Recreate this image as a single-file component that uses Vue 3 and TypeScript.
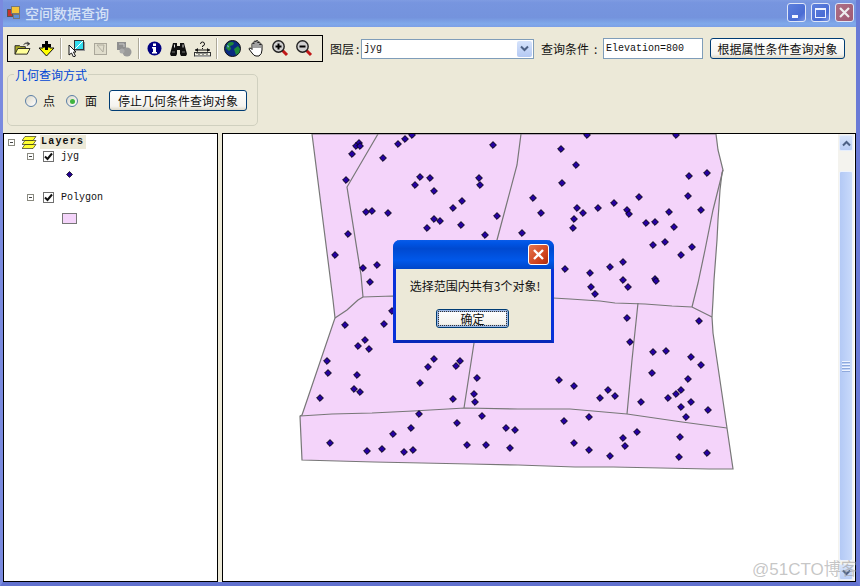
<script setup lang="ts">
const dots: number[][] = [
[359,143],[356,146],[360,146],[352,154],[383,158],[398,144],[405,139],[412,135],[493,145],[561,149],[576,165],[346,180],[420,177],[430,178],[415,185],[434,191],[479,178],[480,185],[562,183],[533,198],[462,201],[453,208],[541,213],[577,208],[574,219],[573,228],[366,212],[372,211],[388,213],[434,219],[440,221],[427,228],[461,225],[497,216],[522,233],[485,235],[348,234],[335,255],[363,268],[377,265],[370,282],[565,269],
[587,135],[676,135],[689,176],[707,173],[688,196],[639,197],[701,210],[669,212],[614,203],[598,208],[583,213],[627,210],[629,214],[646,223],[655,222],[674,227],[653,245],[665,242],[692,247],[681,255],[623,262],[610,267],[590,273],[623,280],[628,287],[591,287],[595,294],[655,279],[656,281],
[345,325],[384,324],[392,311],[365,340],[358,346],[369,349],[327,361],[328,373],[357,375],[354,389],[360,392],[320,398],[434,359],[428,367],[460,361],[456,366],[420,383],[453,399],[477,378],[474,394],[475,402],[559,380],[574,386],[419,414],[411,428],[393,434],[457,423],[482,416],[506,428],[515,430],[564,421],[330,443],[367,451],[382,449],[404,452],[413,450],[467,445],[486,445],[510,448],[574,443],
[627,318],[630,342],[699,321],[653,352],[666,351],[691,357],[701,365],[652,373],[688,379],[608,390],[600,398],[615,396],[641,402],[681,390],[676,394],[668,398],[691,402],[681,407],[708,410],[686,417],[589,417],[637,432],[623,438],[625,446],[680,437],[589,450],[610,456],[679,457],[707,453]
]
const outline = '312,134 333,300 335,318 302,415 300,416 302,460 374,462 422,463 470,464 518,465 575,467 613,467 661,468 709,469 733,469 727,428 713,333 712,317 713,300 714,280 717,240 718,220 720,190 722,173 723,170 718,150 716,134'
const lines: string[] = [
'378,134 347,187 361,275 363,297 393,296 480,297 553,298 570,299 600,301 615,303 645,304 672,306 692,307 698,310 712,317',
'363,297 358,300 347,310 335,318',
'521,134 517,165 505,210 497,240 484,297 474,343 464,408',
'723,170 713,210 705,250 698,283 692,307',
'638,303 632,360 627,414',
'300,416 332,414 372,413 413,411 465,408 518,409 570,409 627,414 682,422 727,428'
]
</script>

<template>
  <div class="win">
    <header class="title">
      <svg class="app-ico" width="13" height="13" viewBox="0 0 13 13">
        <rect x="0.5" y="3.5" width="5" height="7" fill="#c8332a" stroke="#555"/>
        <rect x="4.5" y="0.5" width="8" height="7" fill="#f5c53a" stroke="#777"/>
        <rect x="6.5" y="8.5" width="6" height="4" fill="#5d8fd8" stroke="#777"/>
      </svg>
      <span class="title-text">空间数据查询</span>
      <div class="caps">
        <span class="cap"><i class="min"></i></span>
        <span class="cap"><i class="max"></i></span>
        <span class="cap close">
          <svg width="13" height="13" viewBox="0 0 13 13"><path d="M2 2 11 11M11 2 2 11" stroke="#eee" stroke-width="2.2"/></svg>
        </span>
      </div>
    </header>

    <section class="head">
      <div class="row">
        <div class="toolbar">
          <span class="cell"><svg width="17" height="15" viewBox="0 0 18 16">
            <path d="M1 14V5h5l1 1h5v3" fill="#a8a820" stroke="#222"/>
            <path d="M1 14 4 8h13l-3 6z" fill="#ffff99" stroke="#222"/>
            <path d="M10 4q2-3 5-2l-1-1 3 2-3 2 1-2q-3-1-5 1z" fill="#333" stroke="#333" stroke-width=".5"/>
          </svg></span>
          <span class="cell"><svg width="17" height="17" viewBox="0 0 17 17">
            <path d="M1 8h4v-1h7v1h4l-7.500 8z" fill="#ffff00" stroke="#111"/>
            <path d="M7 1h3v3h3v3h-3v3H7V7H4V4h3z" fill="#000"/>
          </svg></span>
          <i class="sep"></i>
          <span class="cell"><svg width="17" height="17" viewBox="0 0 17 17">
            <rect x="7" y="2" width="10" height="9" fill="#999"/>
            <rect x="6.500" y="0.500" width="9" height="9" fill="#33ddee" stroke="#333"/>
            <path d="M7 9 15 1" stroke="#fff"/>
            <path d="M1 5v10l2.500-2 2 4 2-1-2-4H8z" fill="#fff" stroke="#111"/>
          </svg></span>
          <span class="cell"><svg width="15" height="14" viewBox="0 0 15 14">
            <rect x="1.500" y="1.500" width="12" height="11" fill="#e0ddcc" stroke="#aaa79a"/>
            <path d="M4 3h7l-1 7-6-7" fill="none" stroke="#b0ad9f"/>
          </svg></span>
          <span class="cell"><svg width="16" height="16" viewBox="0 0 16 16">
            <rect x="1" y="1" width="9" height="8" fill="#8f8f8f"/>
            <path d="M3 3h5v3" stroke="#c8c8c8" fill="none"/>
            <circle cx="11" cy="11" r="4.500" fill="#999"/>
            <circle cx="6" cy="10" r="2.500" fill="#aaa"/>
          </svg></span>
          <i class="sep"></i>
          <span class="cell"><svg width="15" height="15" viewBox="0 0 15 15">
            <circle cx="7.500" cy="7.500" r="7" fill="#000080"/>
            <rect x="6" y="2.500" width="3" height="2.500" fill="#fff"/>
            <path d="M5 6h4v5h1v1.500H5V11h1V7.500H5z" fill="#fff"/>
          </svg></span>
          <span class="cell"><svg width="17" height="14" viewBox="0 0 17 14">
            <path d="M3 1h4v3h3V1h4l3 11-1 2h-5l-1-2V8H7v4l-1 2H1l-1-2z" fill="#111"/>
            <path d="M4.500 2.500v3M13 2.500v3" stroke="#ddd"/>
            <path d="M2 10h3M12 10h3" stroke="#777"/>
          </svg></span>
          <span class="cell"><svg width="17" height="16" viewBox="0 0 17 16">
            <path d="M1 9h15" stroke="#111"/>
            <path d="M1 9l3-2v4zM16 9l-3-2v4z" fill="#111"/>
            <path d="M6.500 3q0-2 2-2t2 2-2 2V6M8.500 7v1" fill="none" stroke="#111"/>
            <rect x="0.500" y="11.500" width="16" height="3.500" fill="#f4f4e8" stroke="#333"/>
            <path d="M3 12v1M5 12v2M7 12v1M9 12v2M11 12v1M13 12v2" stroke="#333"/>
            <path d="M1 15.500h16" stroke="#aaa"/>
          </svg></span>
          <i class="sep"></i>
          <span class="cell"><svg width="17" height="17" viewBox="0 0 17 17">
            <circle cx="8.500" cy="8.500" r="8" fill="#0a2a80" stroke="#111"/>
            <path d="M4 3q4-2 6 0l-1 2-3 1 1 3-2 2-3-3zM10 9l4-3 2 3-1 4-3 2-1-3z" fill="#1f8a3a"/>
            <path d="M3 5l2 1-1 2z" fill="#7fb6ff"/>
          </svg></span>
          <span class="cell"><svg width="17" height="17" viewBox="0 0 17 17">
            <path d="M4 8V4q0-1 1-1t1 1V2q0-1 1-1t1 1V1.500q0-1 1-1t1 1V3q0-1 1-1t1 1v2q0-1 1-1t1 1v5q0 4-3 6H8Q6 16 4 13L1 9q0-1 1-1t2 1.500z" fill="#fff" stroke="#111"/>
            <path d="M6 4v4M8 2v6M10 2v6M12 4v4" stroke="#111" stroke-width=".8"/>
          </svg></span>
          <span class="cell"><svg width="17" height="17" viewBox="0 0 17 17">
            <path d="M10 10l5 5" stroke="#c01818" stroke-width="3"/>
            <circle cx="6.500" cy="6.500" r="5.700" fill="#d0d0d0" stroke="#222" stroke-width="1.400"/>
            <path d="M3.500 6.500h6M6.500 3.500v6" stroke="#000" stroke-width="2"/>
          </svg></span>
          <span class="cell"><svg width="17" height="17" viewBox="0 0 17 17">
            <path d="M10 10l5 5" stroke="#c01818" stroke-width="3"/>
            <circle cx="6.500" cy="6.500" r="5.700" fill="#d0d0d0" stroke="#222" stroke-width="1.400"/>
            <path d="M3.500 6.500h6" stroke="#000" stroke-width="2"/>
          </svg></span>
        </div>
        <span class="lbl layer-lbl">图层<span class="colon">:</span></span>
        <div class="combo"><span class="mono">jyg</span><span class="drop"><svg width="9" height="7" viewBox="0 0 9 7"><path d="M1 1.500 4.500 5 8 1.500" fill="none" stroke="#4d6185" stroke-width="2"/></svg></span></div>
        <span class="lbl cond-lbl">查询条件<span class="colon c2">:</span></span>
        <input class="cond mono" value="Elevation=800" />
        <button class="xp attr">根据属性条件查询对象</button>
      </div>

      <fieldset class="group">
        <legend>几何查询方式</legend>
        <span class="radio"></span><span class="rlbl r1">点</span>
        <span class="radio on"><i></i></span><span class="rlbl r2">面</span>
        <button class="xp stop">停止几何条件查询对象</button>
      </fieldset>
    </section>

    <main class="panes">
      <aside class="tree">
        <div class="node n0">
          <i class="pm"></i>
          <svg class="stack" width="15" height="13" viewBox="0 0 15 13">
            <path d="M3 8.500h11l-3 4H0z" fill="#ffff33" stroke="#111" stroke-width=".6"/>
            <path d="M3 4.500h11l-3 4H0z" fill="#ffff33" stroke="#111" stroke-width=".6"/>
            <path d="M3 .5h11l-3 4H0z" fill="#ffff33" stroke="#111" stroke-width=".6"/>
          </svg>
          <b class="mono root-lbl">Layers</b>
        </div>
        <div class="node n1">
          <i class="pm"></i>
          <span class="chk"><svg width="9" height="9" viewBox="0 0 9 9"><path d="M1 4.500 3.500 7 8 1.500" fill="none" stroke="#111" stroke-width="2"/></svg></span>
          <span class="mono">jyg</span>
        </div>
        <div class="sym"><svg width="7" height="7" viewBox="0 0 7 7"><path d="M3.500.5 6.500 3.500 3.500 6.500.5 3.500z" fill="#220090" stroke="#000" stroke-width=".7"/></svg></div>
        <div class="node n2">
          <i class="pm"></i>
          <span class="chk"><svg width="9" height="9" viewBox="0 0 9 9"><path d="M1 4.500 3.500 7 8 1.500" fill="none" stroke="#111" stroke-width="2"/></svg></span>
          <span class="mono">Polygon</span>
        </div>
        <div class="swatch"></div>
      </aside>

      <section class="map">
        <svg class="canvas" width="615" height="447" viewBox="223 134 615 447">
          <polygon :points="outline" fill="#f4d4fa" stroke="#777" stroke-width="1.2"/>
          <polyline v-for="(l,i) in lines" :key="i" :points="l" fill="none" stroke="#777" stroke-width="1.2"/>
          <path v-for="(d,i) in dots" :key="'d'+i" :d="`M${d[0]} ${d[1]-3.4}L${d[0]+3.4} ${d[1]}L${d[0]} ${d[1]+3.4}L${d[0]-3.4} ${d[1]}Z`" fill="#2400a0" stroke="#000" stroke-width=".9" stroke-linejoin="round"/>
        </svg>
        <div class="sbar">
          <span class="sbtn"><svg width="9" height="7" viewBox="0 0 9 7"><path d="M1 5.500 4.500 2 8 5.500" fill="none" stroke="#4d6185" stroke-width="2"/></svg></span>
          <span class="thumb"><i></i><i></i><i></i><i></i></span>
          <span class="sbtn"><svg width="9" height="7" viewBox="0 0 9 7"><path d="M1 1.500 4.500 5 8 1.500" fill="none" stroke="#4d6185" stroke-width="2"/></svg></span>
        </div>
      </section>
    </main>

    <div class="dialog">
      <div class="d-title">
        <span class="d-close"><svg width="13" height="13" viewBox="0 0 13 13"><path d="M2 2 11 11M11 2 2 11" stroke="#fff" stroke-width="2.400"/></svg></span>
      </div>
      <div class="d-body">
        <p class="d-msg">选择范围内共有3个对象!</p>
        <button class="xp d-ok"><span>确定</span></button>
      </div>
    </div>

    <div class="mark">@51CTO博客</div>
  </div>
</template>

<style>
html, body { margin: 0; background: #ece9d8; }
</style>

<style scoped>
.win {
  position: relative;
  width: 860px; height: 586px; box-sizing: border-box; overflow: hidden;
  background: #ece9d8; display: flex; flex-direction: column;
  border-left: 3px solid #7a8adf; border-right: 4px solid #6a7ad6; border-bottom: 4px solid #6272cf;
  font: 12px "Noto Sans CJK SC", "Liberation Sans", sans-serif; color: #111;
}
.mono { font-family: "Liberation Mono", "Noto Sans CJK SC", monospace; font-size: 10px; }
.title {
  height: 27px; flex: none; margin-left: -3px; margin-right: -4px; box-sizing: border-box; padding: 0 6px 2px 7px;
  display: flex; align-items: center; gap: 5px;
  background: linear-gradient(#7f9ce2 0, #7795df 10%, #7493dd 65%, #80a9ea 88%, #7c9fe6 100%);
}
.title-text { font-size: 14px; line-height: 18px; color: #d5e2f6; font-weight: 500; }
.caps { margin-left: auto; display: flex; gap: 5px; }
.cap { width: 19px; height: 19px; border: 1px solid #dfe6f8; border-radius: 3px; box-sizing: border-box; background: linear-gradient(135deg, #5d80dd, #4a6cd4 70%, #7b97e6); display: flex; align-items: center; justify-content: center; position: relative; }
.close { background: linear-gradient(135deg, #ad6f86, #a05a72); }
.min { width: 6px; height: 3px; background: #f4f6ff; position: absolute; left: 4px; bottom: 3px; }
.max { border: 1px solid #eef2ff; border-top-width: 2px; box-sizing: border-box; width: 11px; height: 10px; }

.head { height: 106px; flex: none; box-sizing: border-box; padding: 8px 0 0 4px; }
.row { display: flex; align-items: center; height: 27px; }
.toolbar { width: 316px; height: 27px; box-sizing: border-box; border: 1px solid #000; display: flex; align-items: center; padding-left: 2px; }
.cell { width: 24px; height: 25px; display: flex; align-items: center; justify-content: center; flex: none; }
.sep { width: 1px; height: 21px; background: #aca899; box-shadow: 1px 0 #fff; margin: 0 3px 0 2px; flex: none; }
.lbl { white-space: nowrap; }
.colon { padding-left: 2px; }
.c2 { padding-left: 5px; }
.layer-lbl { margin-left: 7px; width: 32px; }
.combo { width: 173px; height: 20px; margin-left: -1px; box-sizing: border-box; border: 1px solid #7f9db9; background: #fff; display: flex; align-items: center; justify-content: space-between; padding: 0 1px 0 2px; }
.drop { width: 15px; height: 16px; border-radius: 2px; background: linear-gradient(#d6e3fb, #b4c9f3); display: flex; align-items: center; justify-content: center; }
.cond-lbl { margin-left: 7px; width: 62px; }
.cond { width: 100px; height: 21px; box-sizing: border-box; border: 1px solid #7f9db9; padding: 0 2px; margin: 0; outline: none; background: #fff; color: #111; }
.xp { font: inherit; color: #111; padding: 0; box-sizing: border-box; border: 1px solid #003c74; border-radius: 3px; background: linear-gradient(#fff, #f4f3ee 80%, #dcd8c8); }
.attr { width: 135px; height: 21px; margin-left: 7px; }

.group { box-sizing: border-box; width: 251px; height: 58px; margin: 6px 0 0; padding: 0 0 0 17px; border: 1px solid #d0d0bf; border-radius: 5px; display: flex; align-items: flex-start; }
.group legend { padding: 0 1px; margin-left: -11px; color: #0046d5; line-height: 13px; font-size: 12px; }
.radio { width: 12px; height: 12px; margin-top: 14px; box-sizing: border-box; border: 1px solid #5a7ea6; border-radius: 50%; background: linear-gradient(135deg, #dcd8c8, #fff); display: flex; align-items: center; justify-content: center; flex: none; }
.radio i { width: 5px; height: 5px; border-radius: 50%; background: #3fb43f; }
.rlbl { margin-top: 12px; margin-left: 6px; line-height: 16px; }
.r1 { margin-right: 11px; }
.r2 { margin-left: 7px; margin-right: 12px; }
.stop { width: 138px; height: 21px; margin-top: 9px; }

.panes { flex: 1; min-height: 0; display: flex; gap: 4px; }
.tree, .map { box-sizing: border-box; border: 1px solid #000; background: #fff; }
.tree { width: 215px; padding-top: 1px; }
.map { flex: 1; display: flex; }
.node { display: flex; align-items: center; height: 14px; }
.pm { width: 7px; height: 7px; box-sizing: border-box; border: 1px solid #8a8a80; position: relative; flex: none; background: #fff; }
.pm::after { content: ""; position: absolute; left: 1px; right: 1px; top: 2px; height: 1px; background: #444; }
.n0 .pm { margin: 0 7px 0 4px; }
.stack { margin-right: 3px; }
.root-lbl { background: #ece9d8; padding: 0 2px 0 1px; height: 14px; line-height: 14px; font-weight: bold; letter-spacing: 1.2px; }
.n1 { margin-top: 1px; }
.n1, .n2 { padding-left: 23px; height: 13px; }
.chk { width: 11px; height: 11px; box-sizing: border-box; border: 1px solid #6f6f6f; background: #fff; margin: 0 7px 0 9px; display: flex; align-items: center; justify-content: center; flex: none; }
.sym { height: 7px; padding-left: 62px; margin-top: 8px; line-height: 0; }
.n2 { margin-top: 13px; }
.swatch { width: 15px; height: 11px; box-sizing: border-box; background: #f4d4fa; border: 1px solid #777; margin: 9px 0 0 58px; }
.canvas { display: block; flex: none; }
.sbar { width: 16px; flex: none; background: #f4f3ee; display: flex; flex-direction: column; padding: 1px; box-sizing: border-box; }
.sbtn { height: 16px; flex: none; border-radius: 2px; border: 1px solid #e6eefc; box-sizing: border-box; background: linear-gradient(#d8e5fb, #b9cdf5); display: flex; align-items: center; justify-content: center; }
.thumb { flex: 1; margin: 20px 0 3px; border-radius: 2px; background: linear-gradient(90deg, #b3c9f5, #c9dafb); border: 1px solid #eef3fd; box-sizing: border-box; display: flex; flex-direction: column; align-items: center; justify-content: center; gap: 1px; }
.thumb i { width: 8px; height: 1px; background: #eef3fe; box-shadow: 0 1px #8fa9dc; margin-bottom: 1px; }

.dialog { position: absolute; left: 390px; top: 240px; width: 161px; height: 103px; box-sizing: border-box; border: 3px solid #0831d9; border-top: 0; border-bottom-color: #0729b8; border-radius: 7px 7px 0 0; background: #ece9d8; display: flex; flex-direction: column; }
.d-title { height: 29px; flex: none; margin: 0 -3px; border-radius: 7px 7px 0 0; background: linear-gradient(#0a5ce8 0, #0055e5 10%, #0049d0 30%, #0058ea 70%, #0046c8 100%); display: flex; justify-content: flex-end; align-items: center; padding: 0 5px 0 0; }
.d-close { width: 21px; height: 21px; box-sizing: border-box; border: 1px solid #fff; border-radius: 3px; background: linear-gradient(135deg, #e7764e, #cc3f1a 70%, #a92c0c); display: flex; align-items: center; justify-content: center; }
.d-body { flex: 1; display: flex; flex-direction: column; align-items: center; }
.d-msg { margin: 9px 0 0 3px; line-height: 16px; white-space: nowrap; font-size: 12px; }
.d-ok { width: 73px; height: 19px; margin: 15px 0 0 -2px; border-color: #003c74; box-shadow: inset 0 0 0 2px #9db7e4; display: flex; align-items: center; justify-content: center; }
.d-ok span { display: block; width: 69px; height: 15px; line-height: 15px; text-align: center; outline: 1px dotted #333; outline-offset: -1px; }

.mark { position: absolute; left: 749px; top: 555px; font: 17px "Liberation Sans", "Noto Sans CJK SC", sans-serif; color: rgba(150,150,150,.55); white-space: nowrap; pointer-events: none; }
</style>
